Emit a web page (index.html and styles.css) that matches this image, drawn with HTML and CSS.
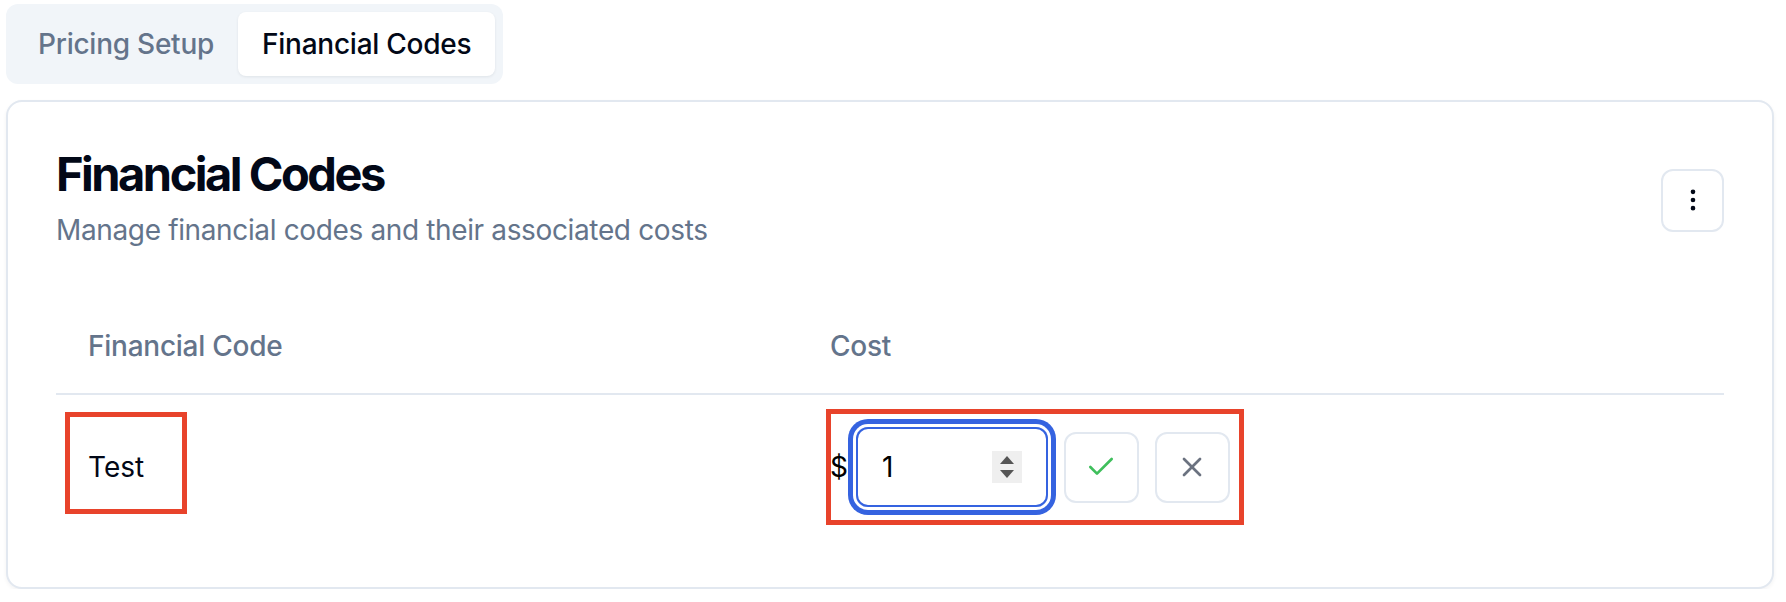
FILE: index.html
```html
<!DOCTYPE html>
<html lang="en">
<head>
<meta charset="utf-8">
<title>Financial Codes</title>
<link rel="stylesheet" href="styles.css">
</head>
<body>
<div class="page">
  <div class="tabs" role="tablist">
    <button class="tab" role="tab">Pricing Setup</button>
    <button class="tab tab-active" role="tab">Financial Codes</button>
  </div>

  <section class="card">
    <header class="card-header">
      <div class="card-titles">
        <h1 class="card-title">Financial Codes</h1>
        <p class="card-desc">Manage financial codes and their associated costs</p>
      </div>
      <button class="icon-btn" aria-label="More">
        <svg class="icon-dots" viewBox="0 0 24 24" fill="none" stroke="currentColor" stroke-width="2" stroke-linecap="round" stroke-linejoin="round"><circle cx="12" cy="12" r="1"/><circle cx="12" cy="5" r="1"/><circle cx="12" cy="19" r="1"/></svg>
      </button>
    </header>

    <div class="card-content">
      <table class="table">
        <colgroup><col class="col-code"><col></colgroup>
        <thead>
          <tr><th>Financial Code</th><th>Cost</th></tr>
        </thead>
        <tbody>
          <tr>
            <td class="cell-code"><span>Test</span><span class="anno anno-code"></span></td>
            <td class="cell-cost">
              <div class="cost-edit">
                <div class="cost-field">
                  <span class="currency">$</span>
                  <div class="num-input">
                    <span class="num-value">1</span>
                    <span class="spinner">
                      <svg viewBox="0 0 30 32" width="30" height="32"><path d="M8 13 L15 5 L22 13 Z" fill="#555"/><path d="M8 19 L15 27 L22 19 Z" fill="#555"/></svg>
                    </span>
                  </div>
                </div>
                <button class="act-btn" aria-label="Save">
                  <svg class="icon-check" viewBox="0 0 24 24" fill="none" stroke="currentColor" stroke-width="2" stroke-linecap="round" stroke-linejoin="round"><polyline points="20 6 9 17 4 12"/></svg>
                </button>
                <button class="act-btn" aria-label="Cancel">
                  <svg class="icon-x" viewBox="0 0 24 24" fill="none" stroke="currentColor" stroke-width="2" stroke-linecap="round" stroke-linejoin="round"><path d="M18 6 6 18"/><path d="m6 6 12 12"/></svg>
                </button>
              </div>
              <span class="anno anno-cost"></span>
            </td>
          </tr>
        </tbody>
      </table>
    </div>
  </section>
</div>
</body>
</html>
```

FILE: styles.css
```css
* { box-sizing: border-box; }

html, body {
  margin: 0;
  padding: 0;
  background: #ffffff;
}

body {
  font-family: Inter, "Noto Sans", "Liberation Sans", sans-serif;
  color: #020817;
}

.page {
  padding: 4px 12px 0 6px;
}

/* Tabs */
.tabs {
  display: inline-flex;
  align-items: center;
  height: 80px;
  padding: 8px;
  background: #f1f5f9;
  border-radius: 12px;
}

.tab {
  height: 64px;
  padding: 0 24px;
  border: 0;
  background: transparent;
  font-family: inherit;
  font-size: 28px;
  font-weight: 500;
  color: #64748b;
  border-radius: 8px;
  letter-spacing: -0.25px;
}

.tab-active {
  background: #ffffff;
  color: #020817;
  box-shadow: 0 1px 3px rgba(15, 23, 42, 0.08);
}

/* Card */
.card {
  margin-top: 16px;
  border: 2px solid #e2e8f0;
  border-radius: 16px;
  background: #fff;
  box-shadow: 0 2px 4px rgba(15, 23, 42, 0.05);
}

.card-header {
  display: flex;
  align-items: center;
  justify-content: space-between;
  padding: 48px;
}

.card-title {
  margin: 0;
  font-size: 47px;
  line-height: 48px;
  font-weight: 700;
  letter-spacing: -2.5px;
  color: #020817;
}

.card-desc {
  margin: 12px 0 0;
  font-size: 28px;
  line-height: 40px;
  color: #64748b;
  letter-spacing: -0.36px;
}

.icon-btn {
  width: 63px;
  height: 63px;
  display: flex;
  align-items: center;
  justify-content: center;
  padding: 0;
  border: 2px solid #e2e8f0;
  border-radius: 12px;
  background: #fff;
  color: #020817;
}

.icon-dots {
  width: 28px;
  height: 28px;
}

.card-content {
  padding: 0 48px 48px;
}

/* Table */
.table {
  width: 100%;
  border-collapse: collapse;
  table-layout: fixed;
  font-size: 28px;
}

.col-code { width: 742px; }

.table thead tr {
  border-bottom: 2px solid #e2e8f0;
}

.table th {
  height: 96px;
  padding: 0 32px;
  text-align: left;
  vertical-align: middle;
  font-weight: 500;
  color: #64748b;
  letter-spacing: -0.25px;
}

.table td {
  position: relative;
  padding: 32px;
  vertical-align: middle;
  line-height: 40px;
  color: #020817;
}

.cost-edit {
  display: flex;
  align-items: center;
  gap: 16px;
}

.cost-field {
  display: flex;
  align-items: center;
  gap: 8px;
}

.currency {
  color: #000;
}

.num-input {
  width: 192px;
  height: 80px;
  display: flex;
  align-items: center;
  justify-content: space-between;
  padding: 0 24px 0 24px;
  border: 2px solid #3563e0;
  border-radius: 12px;
  box-shadow: 0 0 0 3px #ffffff, 0 0 0 8px #3563e0;
  color: #000;
}

.spinner {
  display: block;
  width: 30px;
  height: 32px;
  background: #efefef;
}

.spinner svg { display: block; }

.act-btn {
  width: 75px;
  height: 71px;
  display: flex;
  align-items: center;
  justify-content: center;
  padding: 0;
  border: 2px solid #e2e8f0;
  border-radius: 12px;
  background: #fff;
}

.icon-check {
  width: 32px;
  height: 32px;
  color: #3fbf5c;
}

.icon-x {
  width: 32px;
  height: 32px;
  color: #6b7280;
}

/* Annotation overlays */
.anno {
  position: absolute;
  border: 5px solid #e8432b;
  pointer-events: none;
}

.anno-code {
  left: 9px;
  top: 17px;
  width: 122px;
  height: 102px;
}

.anno-cost {
  left: 28px;
  top: 14px;
  width: 418px;
  height: 116px;
}
```
